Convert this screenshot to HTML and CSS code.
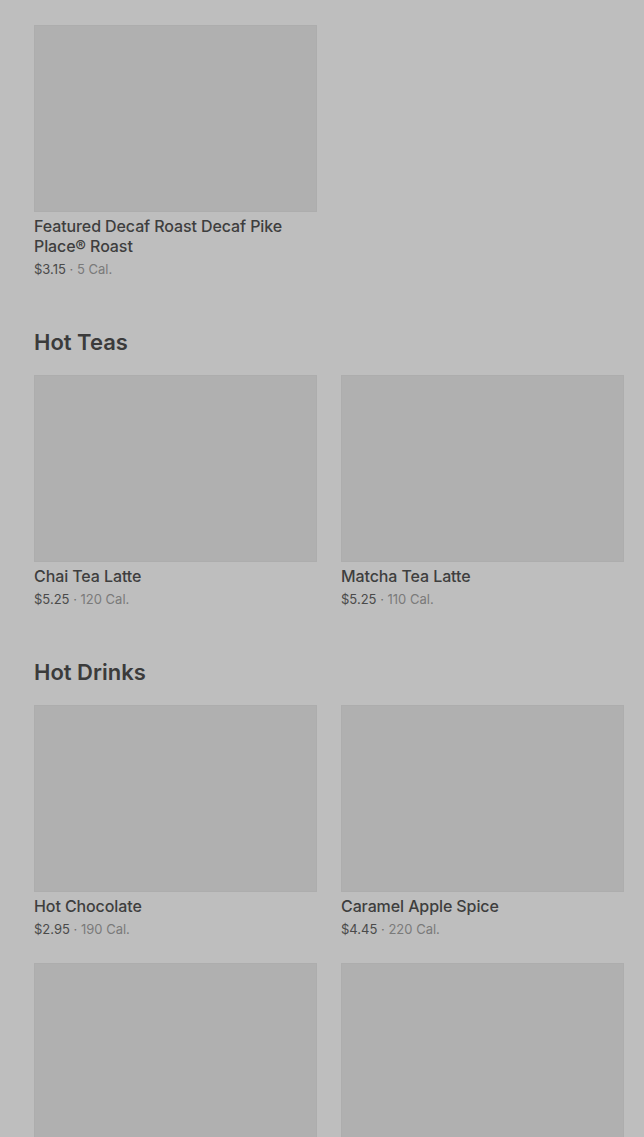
FILE: index.html
```html
<!DOCTYPE html>
<html lang="en">
<head>
    <meta charset="UTF-8">
    <meta name="viewport" content="width=device-width, initial-scale=1.0">
    <title>Menu</title>
    <link rel="stylesheet" href="styles.css">
</head>
<body>
    <main class="menu">
        <section class="menu-section first">
            <div class="product-grid">
                <div class="product">
                    <div class="product-image"></div>
                    <h3>Featured Decaf Roast Decaf Pike Place&reg; Roast</h3>
                    <p class="meta"><span class="price">$3.15</span> &middot; <span class="cal">5 Cal.</span></p>
                </div>
            </div>
        </section>

        <section class="menu-section">
            <h2>Hot Teas</h2>
            <div class="product-grid">
                <div class="product">
                    <div class="product-image"></div>
                    <h3>Chai Tea Latte</h3>
                    <p class="meta"><span class="price">$5.25</span> &middot; <span class="cal">120 Cal.</span></p>
                </div>
                <div class="product">
                    <div class="product-image"></div>
                    <h3>Matcha Tea Latte</h3>
                    <p class="meta"><span class="price">$5.25</span> &middot; <span class="cal">110 Cal.</span></p>
                </div>
            </div>
        </section>

        <section class="menu-section">
            <h2>Hot Drinks</h2>
            <div class="product-grid">
                <div class="product">
                    <div class="product-image"></div>
                    <h3>Hot Chocolate</h3>
                    <p class="meta"><span class="price">$2.95</span> &middot; <span class="cal">190 Cal.</span></p>
                </div>
                <div class="product">
                    <div class="product-image"></div>
                    <h3>Caramel Apple Spice</h3>
                    <p class="meta"><span class="price">$4.45</span> &middot; <span class="cal">220 Cal.</span></p>
                </div>
                <!-- next row continues below the fold -->
                <div class="product">
                    <div class="product-image"></div>
                </div>
                <div class="product">
                    <div class="product-image"></div>
                </div>
            </div>
        </section>
    </main>
</body>
</html>
```

FILE: styles.css
```css
html, body {
    margin: 0;
    padding: 0;
}

body {
    background: #bebebe;
    font-family: Inter, "Noto Sans", sans-serif;
    color: #3c3c3c;
    overflow: hidden;
}

.menu {
    padding: 25px 20px 0 34px;
}

.menu-section {
    margin-top: 50px;
}

.menu-section.first {
    margin-top: 0;
}

.menu-section h2 {
    margin: 0 0 19px 0;
    font-size: 22px;
    line-height: 28px;
    font-weight: 600;
    letter-spacing: 0;
    color: #3b3b3b;
}

.product-grid {
    display: grid;
    grid-template-columns: 283px 283px;
    column-gap: 24px;
    row-gap: 25px;
}

.product-image {
    height: 187px;
    background: #b0b0b0;
    box-shadow: inset 0 0 0 1px #adadad;
}

.product h3 {
    margin: 4px 0 0 0;
    font-size: 16px;
    line-height: 20px;
    font-weight: 500;
    letter-spacing: -0.1px;
    color: #3e3e3e;
}

.meta {
    margin: 4px 0 0 0;
    font-size: 13px;
    line-height: 18px;
    color: #707070;
}

.meta .price {
    color: #4a4a4a;
}

.meta .cal {
    color: #7a7a7a;
}
```
